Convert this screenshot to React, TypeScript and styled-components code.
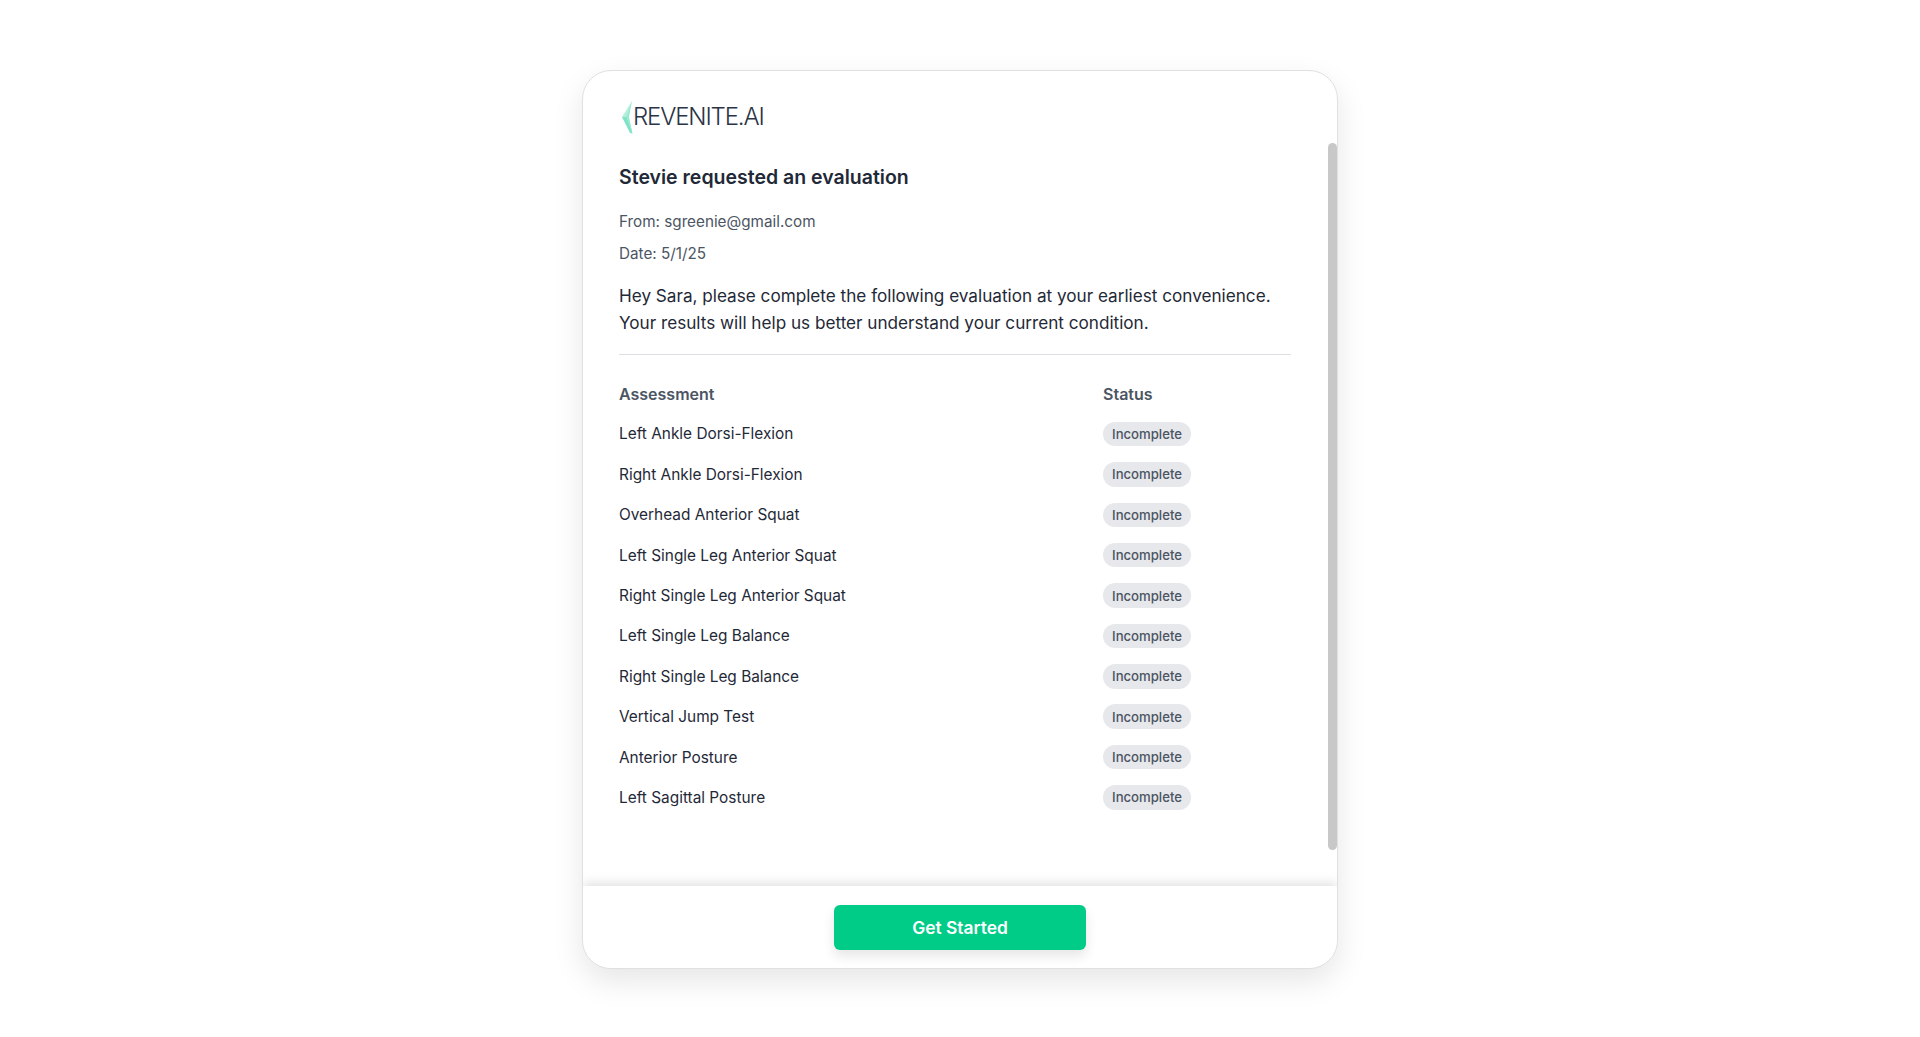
import React from "react";
import styled, { createGlobalStyle } from "styled-components";

const Global = createGlobalStyle`
  html, body { margin: 0; padding: 0; background: #ffffff; }
  body { font-family: Inter, "Liberation Sans", sans-serif; color: #1f2937; }
  * { box-sizing: border-box; }
`;

const Page = styled.div`
  height: 1037px;
  overflow: hidden;
  display: flex;
  justify-content: center;
  padding: 70px 0 0 0;
`;

const Card = styled.section`
  position: relative;
  width: 756px;
  height: 899px;
  display: flex;
  flex-direction: column;
  background: #ffffff;
  border: 1px solid #e0e0e0;
  border-radius: 29px;
  overflow: hidden;
  box-shadow: 0 12px 30px rgba(0, 0, 0, 0.1);
`;

const Body = styled.div`
  flex: 1;
  min-height: 0;
  padding: 29px 46px 0 36px;
`;

const ScrollThumb = styled.div`
  position: absolute;
  top: 72px;
  right: 0;
  width: 9px;
  height: 707px;
  border-radius: 5px;
  background: #c8c8c8;
`;

const LogoRow = styled.div`
  display: flex;
  align-items: center;
  height: 34px;
`;

const LogoText = styled.span`
  font-size: 24px;
  font-weight: 300;
  letter-spacing: -1.15px;
  line-height: 34px;
  color: #2b3445;
`;

const Title = styled.h1`
  margin: 29px 0 0;
  font-size: 19.5px;
  line-height: 28px;
  font-weight: 600;
  color: #1f2937;
`;

const Meta = styled.div<{ $gap: number }>`
  font-size: 15.25px;
  line-height: 22px;
  color: #4b5563;
  margin-top: ${(p) => p.$gap}px;
`;

const Message = styled.p`
  margin: 17px 0 0;
  font-size: 17.15px;
  line-height: 27px;
  color: #1f2937;
`;

const Divider = styled.hr`
  margin: 18px 0 0;
  border: 0;
  border-top: 1px solid #dcdee2;
`;

const Table = styled.div`
  margin-top: 18.4px;
  display: flex;
  flex-direction: column;
`;

const Row = styled.div`
  display: grid;
  grid-template-columns: 484px 1fr;
  align-items: center;
  height: 40.4px;
`;

const HeadCell = styled.div`
  font-size: 16px;
  font-weight: 600;
  color: #4b5563;
`;

const NameCell = styled.div`
  font-size: 15.4px;
  color: #1f2937;
`;

const Badge = styled.span`
  display: inline-flex;
  align-items: center;
  justify-content: center;
  width: 88px;
  height: 24.5px;
  border-radius: 12.25px;
  background: #e7e8eb;
  font-size: 13.15px;
  font-weight: 500;
  color: #4b5563;
`;

const Footer = styled.footer`
  flex: none;
  height: 82px;
  display: flex;
  justify-content: center;
  padding-top: 18.5px;
  background: #ffffff;
  box-shadow: 0 -3px 10px rgba(0, 0, 0, 0.12);
  position: relative;
`;

const StartButton = styled.button`
  width: 252px;
  height: 45px;
  border: 0;
  border-radius: 6px;
  background: #00cc88;
  color: #ffffff;
  font-family: inherit;
  font-size: 17.4px;
  font-weight: 600;
  box-shadow: 0 6px 12px rgba(0, 0, 0, 0.1);
`;

const LogoMark = () => (
  <svg width="14" height="34" viewBox="0 0 14 34" aria-hidden="true">
    <polygon points="3,17 13,1 9,17" fill="#b5efdd" />
    <polygon points="3,17 9,17 13.5,33.5 11,33" fill="#7fe3c8" />
    <polygon points="7,17 13,1 10,17 13.5,33.5" fill="#9aead2" />
  </svg>
);

const assessments = [
  "Left Ankle Dorsi-Flexion",
  "Right Ankle Dorsi-Flexion",
  "Overhead Anterior Squat",
  "Left Single Leg Anterior Squat",
  "Right Single Leg Anterior Squat",
  "Left Single Leg Balance",
  "Right Single Leg Balance",
  "Vertical Jump Test",
  "Anterior Posture",
  "Left Sagittal Posture",
];

export default function App() {
  return (
    <Page>
      <Global />
      <Card>
        <Body>
          <LogoRow>
            <LogoMark />
            <LogoText>REVENITE.AI</LogoText>
          </LogoRow>
          <Title>Stevie requested an evaluation</Title>
          <Meta $gap={20}>From: sgreenie@gmail.com</Meta>
          <Meta $gap={10}>Date: 5/1/25</Meta>
          <Message>
            Hey Sara, please complete the following evaluation at your earliest convenience.
            <br />
            Your results will help us better understand your current condition.
          </Message>
          <Divider />
          <Table>
            <Row>
              <HeadCell>Assessment</HeadCell>
              <HeadCell>Status</HeadCell>
            </Row>
            {assessments.map((name) => (
              <Row key={name}>
                <NameCell>{name}</NameCell>
                <div>
                  <Badge>Incomplete</Badge>
                </div>
              </Row>
            ))}
          </Table>
        </Body>
        <ScrollThumb />
        <Footer>
          <StartButton>Get Started</StartButton>
        </Footer>
      </Card>
    </Page>
  );
}
